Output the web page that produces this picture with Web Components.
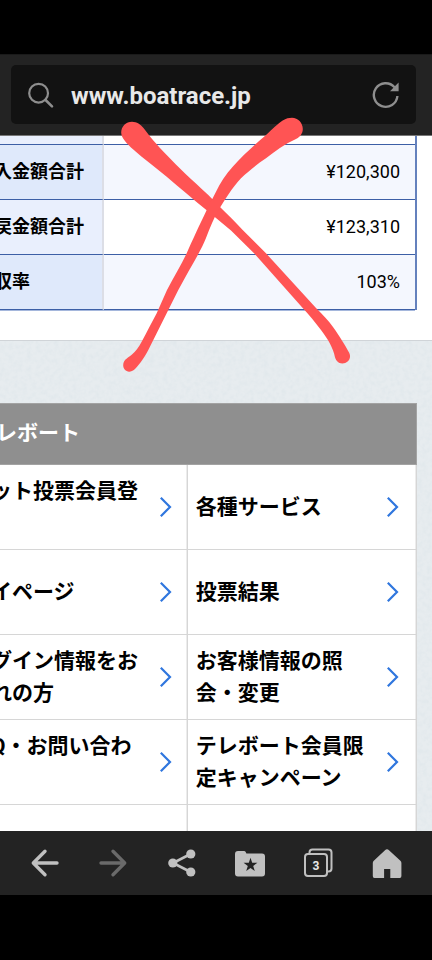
<!DOCTYPE html>
<html lang="ja">
<head>
<meta charset="utf-8">
<meta name="viewport" content="width=device-width, initial-scale=1">
<title>www.boatrace.jp</title>
<style>
body{
    margin: 0;
    background-color: #000;
}
</style>
</head>
<body>

<phone-screen>
  <address-bar slot="top" url="www.boatrace.jp"></address-bar>

  <result-table></result-table>

  <link-menu heading="レボート">
    <menu-row>
      <menu-cell tall>ット投票会員登</menu-cell>
      <menu-cell>各種サービス</menu-cell>
    </menu-row>
    <menu-row>
      <menu-cell>イページ</menu-cell>
      <menu-cell>投票結果</menu-cell>
    </menu-row>
    <menu-row>
      <menu-cell>グイン情報をお<br>れの方</menu-cell>
      <menu-cell>お客様情報の照<br>会・変更</menu-cell>
    </menu-row>
    <menu-row>
      <menu-cell tall>Q・お問い合わ</menu-cell>
      <menu-cell>テレボート会員限<br>定キャンペーン</menu-cell>
    </menu-row>
    <menu-row>
      <menu-cell empty></menu-cell>
      <menu-cell empty></menu-cell>
    </menu-row>
  </link-menu>

  <nav-bar slot="bottom"></nav-bar>
  <red-cross slot="marks"></red-cross>
</phone-screen>

<script>
function makeTemplate(html) {
    const template = document.createElement('template');
    template.innerHTML = html;
    return template;
}

const screenTemplate = makeTemplate(`
<style>
:host{
    display: flex;
    flex-direction: column;
    box-sizing: border-box;
    height: 100vh;
    padding: 54px 0 65px;
    position: relative;
    overflow: hidden;
    background-color: #000;
    color: #000;
    font-family: Roboto, "Noto Sans CJK JP", sans-serif;
}
main{
    flex: 1;
    min-height: 0;
    position: relative;
    overflow: hidden;
    background-color: #e7ecef;
}
.paper{
    position: absolute;
    inset: 0;
    width: 100%;
    height: 100%;
}
.content{position: relative;}
</style>
<slot name="top"></slot>
<main>
  <svg class="paper" aria-hidden="true">
    <filter id="grain" x="0" y="0" width="100%" height="100%">
      <feTurbulence type="fractalNoise" baseFrequency="0.22" numOctaves="3" seed="4"/>
      <feColorMatrix values="0 0 0 0 0.55  0 0 0 0 0.66  0 0 0 0 0.72  0.35 0 0 0 -0.13"/>
    </filter>
    <rect width="100%" height="100%" filter="url(#grain)"/>
  </svg>
  <div class="content"><slot></slot></div>
</main>
<slot name="bottom"></slot>
<slot name="marks"></slot>
`);

const addressTemplate = makeTemplate(`
<style>
:host{
    display: block;
    padding: 10px 16px 11px 11px;
    background-color: #232323;
    border-top: 1px solid #1a1a1a;
    border-bottom: 1px solid #777;
}
form{
    display: flex;
    align-items: center;
    gap: 16px;
    height: 59px;
    padding: 0 16px;
    border-radius: 5px;
    background-color: #121212;
}
svg{
    display: block;
    flex: none;
    fill: none;
    stroke: #8e8e8e;
}
input{
    flex: 1;
    min-width: 0;
    padding: 2px 0 0;
    border: 0;
    outline: 0;
    background: none;
    color: #e8e8e8;
    font: 700 24px Roboto, sans-serif;
}
button{
    padding: 0;
    border: 0;
    background: none;
}
</style>
<form>
  <svg width="28" height="28" viewBox="0 0 28 28" stroke-width="2.2" stroke-linecap="round">
    <circle cx="11.6" cy="12.2" r="9.4"/>
    <path d="M18.3 18.8L25 25.4" stroke-width="2.6"/>
  </svg>
  <input type="text" aria-label="アドレス">
  <button type="button" aria-label="再読み込み">
    <svg width="28" height="28" viewBox="0 0 28 28" stroke-width="2.4">
      <path d="M25.4 15A11.8 11.8 0 1 1 22.5 6.2"/>
      <path d="M26.6 1.6V10.2H18Z" fill="#8e8e8e" stroke="none"/>
    </svg>
  </button>
</form>
`);

const resultTemplate = makeTemplate(`
<style>
:host{
    display: block;
    padding: 0 15px 30px 0;
    margin-bottom: 62px;
    background-color: #fff;
    border-bottom: 1px solid #d0d4d8;
}
table{
    width: 100%;
    table-layout: fixed;
    border-spacing: 0;
    border-right: 2px solid #6481bd;
    font-size: 18px;
    line-height: 26px;
}
th, td{
    box-sizing: border-box;
    height: 55px;
    padding: 0;
    border-bottom: 1px solid #3c5fa6;
    box-shadow: 0 1px 0 #a5b7dc;
    white-space: nowrap;
}
th{
    width: 104px;
    border-right: 2px solid #dcdee6;
    background-color: #e9effd;
    font-weight: 700;
    text-align: left;
}
th span{margin-left: -6px;}
td{
    padding-right: 15px;
    background-color: #fff;
    text-align: right;
}
tr:nth-child(even) th{background-color: #dfe9fb;}
tr:nth-child(even) td{background-color: #f4f7fe;}
.cut th, .cut td{height: 9px;}
</style>
<table>
  <tr class="cut"><th></th><td></td></tr>
  <tr><th scope="row"><span>入金額合計</span></th><td>¥120,300</td></tr>
  <tr><th scope="row"><span>戻金額合計</span></th><td>¥123,310</td></tr>
  <tr><th scope="row"><span>収率</span></th><td>103%</td></tr>
</table>
`);

const menuTemplate = makeTemplate(`
<style>
:host{
    display: block;
    margin-right: 15px;
    background-color: #fff;
}
h2{
    box-sizing: border-box;
    height: 62px;
    margin: 0;
    padding: 14px 0;
    background-color: #8f8f8f;
    border: 1px solid #a3a3a3;
    border-left: 0;
    color: #fff;
    font-size: 21px;
    line-height: 30px;
    font-weight: 700;
}
h2 span{margin-left: -4px;}
</style>
<h2><span></span></h2>
<slot></slot>
`);

const rowTemplate = makeTemplate(`
<style>
:host{
    display: grid;
    grid-template-columns: 45fr 55fr;
}
::slotted(menu-cell:first-child){
    --text-start: -9px;
    --arrow-end: 15px;
}
</style>
<slot></slot>
`);

const cellTemplate = makeTemplate(`
<style>
:host{
    display: block;
    border-right: 1px solid #d6d6d6;
    border-bottom: 1px solid #d6d6d6;
    box-shadow: inset -1px 0 0 #ececec;
    min-width: 0;
}
a{
    display: flex;
    align-items: center;
    justify-content: space-between;
    height: 84px;
    padding-right: var(--arrow-end, 17px);
    color: #000;
    font-size: 21px;
    line-height: 32px;
    font-weight: 700;
    text-decoration: none;
    white-space: nowrap;
}
span{margin-left: var(--text-start, 8px);}
:host([tall]) span{min-height: 64px;}
:host([empty]) a{visibility: hidden;}
svg{
    flex: none;
    fill: none;
    stroke: #2f76de;
    stroke-width: 2.2;
}
</style>
<a href="#"><span><slot></slot></span>
<svg width="12" height="20" viewBox="0 0 12 20"><path d="M.8 .8L10 10L.8 19.2"/></svg></a>
`);

const navTemplate = makeTemplate(`
<style>
:host{
    display: block;
    background-color: #232323;
}
nav{
    display: flex;
    height: 64px;
    padding: 0 11px;
}
button{
    flex: 1;
    display: flex;
    align-items: center;
    justify-content: center;
    padding: 0;
    border: 0;
    background: none;
    color: #c0c0c0;
}
button:disabled{color: #6a6a6a;}
svg{display: block;}
.line{
    fill: none;
    stroke: currentColor;
    stroke-width: 3.4;
    stroke-linecap: round;
    stroke-linejoin: round;
}
text{
    fill: #e8e8e8;
    font: 700 12px Roboto, sans-serif;
    text-anchor: middle;
}
</style>
<nav>
  <button type="button" aria-label="戻る">
    <svg width="30" height="30" viewBox="0 0 30 30"><path class="line" d="M15 3.3L3.3 15L15 26.7M3.8 15H27"/></svg>
  </button>
  <button type="button" aria-label="進む" disabled>
    <svg width="30" height="30" viewBox="0 0 30 30"><path class="line" d="M15 3.3L26.7 15L15 26.7M26.2 15H3"/></svg>
  </button>
  <button type="button" aria-label="共有">
    <svg width="30" height="30" viewBox="0 0 30 30" fill="currentColor">
      <path d="M23.6 6L6 15L23.6 24" fill="none" stroke="currentColor" stroke-width="2.6"/>
      <circle cx="5.8" cy="15" r="4.6"/><circle cx="23.8" cy="6" r="4.6"/><circle cx="23.8" cy="24" r="4.6"/>
    </svg>
  </button>
  <button type="button" aria-label="ブックマーク">
    <svg width="30" height="30" viewBox="0 0 30 30" fill="currentColor">
      <path d="M3 3H9Q10.3 3 10.8 4.2L11.4 5.6H27Q30 5.6 30 8.6V25.4Q30 28.4 27 28.4H3Q0 28.4 0 25.4V6Q0 3 3 3Z"/>
      <path fill="#232323" d="M15.5 9.8L17.2 14.8H22.4L18.2 17.9L19.8 23L15.5 19.9L11.2 23L12.8 17.9L8.6 14.8H13.8Z"/>
    </svg>
  </button>
  <button type="button" aria-label="タブ">
    <svg width="30" height="30" viewBox="0 0 30 30">
      <g fill="none" stroke="currentColor" stroke-width="2">
        <rect x="2" y="6" width="22" height="22" rx="3"/>
        <path d="M6.500 6V4.500Q6.500 1.500 9.500 1.500H25.500Q28.500 1.500 28.500 4.500V20.500Q28.500 23.500 25.500 23.500H24"/>
      </g>
      <text x="13" y="22">3</text>
    </svg>
  </button>
  <button type="button" aria-label="ホーム">
    <svg width="30" height="30" viewBox="0 0 30 30" fill="currentColor">
      <path d="M15 1.2Q16 1.2 17 2.2L28.4 12.8Q29.4 13.8 29.4 15V28Q29.4 30 27.8 30H18.3V21H12.1V30H2.4Q.8 30 .8 28V15Q.8 13.8 1.8 12.8L13 2.2Q14 1.2 15 1.2Z"/>
    </svg>
  </button>
</nav>
`);

// hand drawn cross lying over the page
const crossTemplate = makeTemplate(`
<style>
:host{
    display: block;
    position: absolute;
    top: 110px;
    left: 110px;
    pointer-events: none;
}
svg{display: block;}
</style>
<svg width="250" height="270" viewBox="110 110 250 270" fill="#ff5454" aria-hidden="true">
  <path d="M132 121.7C137 121.7 140.5 124.5 143.5 128C149 135.5 156 144 166.7 155C178 167 192 180 208.3 195L220 207C228 214.5 235 222 242.7 230L266 253.3L316 308C323 315 328.5 320.5 333 327C340 337 344.5 344 349.3 353C352 359 347 363.5 342.5 363.5C338 363.5 335.5 360 334.8 356.5C333.5 349 328 339 321 330C315.5 322.5 309 315 302.7 308L254.3 253.5L231 230.5L206.7 210.2C193 199 180 188 166.7 176.7C155 167 144 159 133.3 149.5C127 144 121.5 138 121.2 133C121 126.5 126 121.7 132 121.7Z"/>
  <path d="M292 117.8C298 117.8 302.8 123 302.8 129C302.8 133.5 300 137 296 139C285 144 275 151 266 158.3C256 165 248 171.5 241 178.3C232 188 224 201 219.5 208.5C214 217 210 228 206 238C201 251 190 268 178.3 290L163.3 320L148.3 350C145 356.5 140 364 135 369C129 374.5 123 370.5 123.2 365C123.4 359 129 357.5 132 354.5C136 351 139 347 141.5 342C147 332 152 322 156.7 313.3L167 290C174 277 181 265 186.7 253.3C192 241 200 224 206.7 210L216 191.7C220 183 226 174 232.7 166.7C243 155 256 143.5 266 135C272 129.5 278 123.5 282.7 120.5C286 118.5 289 117.8 292 117.8Z"/>
</svg>
`);

class ShadowElement extends HTMLElement {
    constructor(template) {
        super();
        this.attachShadow({mode: 'open'});
        this.shadowRoot.appendChild(template.content.cloneNode(true));
    }
}

class PhoneScreen extends ShadowElement {
    constructor() { super(screenTemplate); }
}

class AddressBar extends ShadowElement {
    constructor() { super(addressTemplate); }
    connectedCallback() {
        this.shadowRoot.querySelector('input').value = this.getAttribute('url');
    }
}

class ResultTable extends ShadowElement {
    constructor() { super(resultTemplate); }
}

class LinkMenu extends ShadowElement {
    constructor() { super(menuTemplate); }
    connectedCallback() {
        this.shadowRoot.querySelector('h2 span').textContent = this.getAttribute('heading');
    }
}

class MenuRow extends ShadowElement {
    constructor() { super(rowTemplate); }
}

class MenuCell extends ShadowElement {
    constructor() { super(cellTemplate); }
}

class NavBar extends ShadowElement {
    constructor() { super(navTemplate); }
}

class RedCross extends ShadowElement {
    constructor() { super(crossTemplate); }
}

customElements.define('phone-screen', PhoneScreen);
customElements.define('address-bar', AddressBar);
customElements.define('result-table', ResultTable);
customElements.define('link-menu', LinkMenu);
customElements.define('menu-row', MenuRow);
customElements.define('menu-cell', MenuCell);
customElements.define('nav-bar', NavBar);
customElements.define('red-cross', RedCross);
</script>
</body>
</html>
